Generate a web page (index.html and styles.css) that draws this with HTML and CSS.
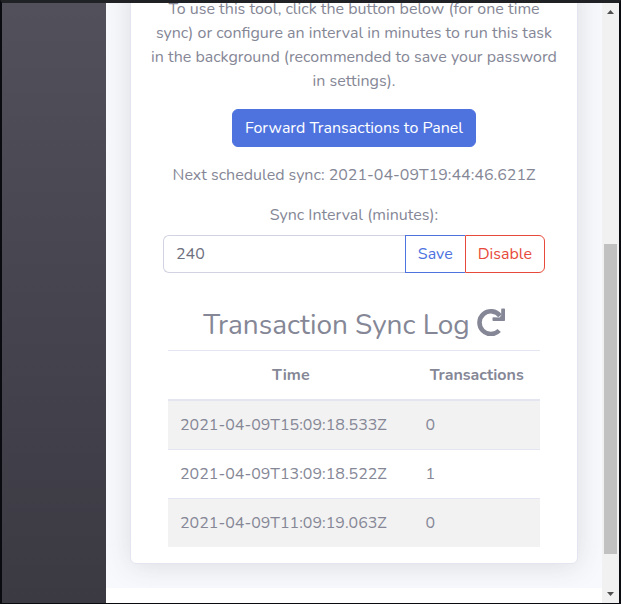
FILE: index.html
```html
<!DOCTYPE html>
<html lang="en">
<head>
<meta charset="utf-8">
<title>Transaction Sync</title>
<link rel="stylesheet" href="styles.css">
</head>
<body>
<div class="window">
  <nav class="sidebar" aria-label="Sidebar"></nav>
  <div class="page">
    <main class="content">
      <section class="card">
        <p class="intro">To use this tool, click the button below (for one time<br>sync) or configure an interval in minutes to run this task<br>in the background (recommended to save your password<br>in settings).</p>
        <button class="btn btn-primary" type="button">Forward Transactions to Panel</button>
        <p class="text">Next scheduled sync: 2021-04-09T19:44:46.621Z</p>
        <form class="interval">
          <label for="interval">Sync Interval (minutes):</label>
          <div class="input-group">
            <input id="interval" type="text" inputmode="numeric" value="240">
            <button class="btn btn-save" type="button">Save</button>
            <button class="btn btn-disable" type="button">Disable</button>
          </div>
        </form>
        <h3 class="log-title">Transaction Sync Log
          <svg class="icon" viewBox="0 0 28 28" aria-hidden="true">
            <path d="M22.2 22.5A11.4 11.4 0 1 1 23 7.8" fill="none" stroke="currentColor" stroke-width="4.6"/>
            <path d="M28 1.2V12.2Q28 13 27.2 13H16.2Q15.500 13 15.500 12.2V10.1Q15.500 9.3 16.3 9.3L22.500 9.6L24.2 7.500V1.2Q24.2 .500 25 .500H27.2Q28 .500 28 1.2Z" fill="currentColor"/>
          </svg>
        </h3>
        <table class="log">
          <thead>
            <tr><th scope="col">Time</th><th scope="col">Transactions</th></tr>
          </thead>
          <tbody>
            <tr><td>2021-04-09T15:09:18.533Z</td><td>0</td></tr>
            <tr><td>2021-04-09T13:09:18.522Z</td><td>1</td></tr>
            <tr><td>2021-04-09T11:09:19.063Z</td><td>0</td></tr>
          </tbody>
        </table>
      </section>
    </main>
    <footer class="footer"></footer>
  </div>
  <div class="scrollbar" aria-hidden="true">
    <svg class="arrow" viewBox="0 0 17 17"><path d="M5 11h7L8.500 7z" fill="#505050"/></svg>
    <div class="track"><div class="thumb"></div></div>
    <svg class="arrow" viewBox="0 0 17 17"><path d="M5 6h7L8.500 10z" fill="#505050"/></svg>
  </div>
</div>
</body>
</html>
```
FILE: styles.css
```css
* { box-sizing: border-box; }

body {
  margin: 0;
  color: #858796;
  font: 16px/24px Nunito, Roboto, sans-serif;
}

.window {
  display: flex;
  height: 100vh;
  border: 2px solid #0a0b11;
  border-top: 3px solid #202124;
  border-bottom-width: 1px;
  overflow: hidden;
}

.sidebar {
  flex: 0 0 104px;
  background: linear-gradient(#51505b, #3b3a43);
}

/* Scrolled to its end: the top of the card runs out of view. */
.page {
  flex: 1;
  min-width: 0;
  display: flex;
  flex-direction: column;
  justify-content: flex-end;
  overflow: hidden;
  background: #f8f9fc;
}

.content { flex: none; padding: 24px; }

.card {
  display: flex;
  flex-direction: column;
  align-items: center;
  padding: 16px 20px;
  border: 1px solid #e3e6f0;
  border-radius: 6px;
  background: #fff;
  box-shadow: 0 2px 28px rgba(58, 59, 69, 0.15);
  text-align: center;
}

.intro, .text { margin: 0 0 16px; white-space: nowrap; }

.btn {
  height: 38px;
  padding: 0 12px;
  border: 1px solid;
  background: #fff;
  font: inherit;
}

.btn-primary {
  margin-bottom: 16px;
  border-color: #4e73df;
  border-radius: 6px;
  background: #4e73df;
  color: #fff;
}

.interval { align-self: stretch; padding: 0 12px; }

.interval label { display: block; margin-bottom: 8px; }

.input-group { display: flex; }

.input-group input {
  flex: 1;
  min-width: 0;
  height: 38px;
  padding: 0 12px;
  border: 1px solid #d1d3e2;
  border-right: 0;
  border-radius: 6px 0 0 6px;
  background: #fff;
  color: #6e707e;
  font: inherit;
}

.btn-save { border-color: #4e73df; border-right: 0; color: #4e73df; }

.btn-disable {
  border-color: #e74a3b;
  border-radius: 0 6px 6px 0;
  color: #e74a3b;
}

.log-title {
  display: flex;
  align-items: flex-start;
  gap: 7px;
  margin: 35px 0 8px;
  font-size: 28px;
  line-height: 34px;
  font-weight: 400;
  white-space: nowrap;
}

.icon { width: 28px; height: 28px; }

.log {
  width: calc(100% - 34px);
  border-collapse: collapse;
}

.log th, .log td {
  padding: 12px;
  border-top: 1px solid #e3e6f0;
}

.log th { border-bottom: 2px solid #e3e6f0; font-weight: 700; }
.log th:first-child { width: 66%; }
.log td { text-align: left; }
.log tbody tr:nth-child(odd) { background: #f2f2f2; }

.footer {
  position: relative;
  flex: 0 0 15px;
  background: #fff;
}

.scrollbar {
  flex: 0 0 17px;
  display: flex;
  flex-direction: column;
  background: #f1f1f1;
}

.arrow { flex: none; width: 17px; height: 17px; }

.track {
  flex: 1;
  display: flex;
  flex-direction: column;
  justify-content: flex-end;
  padding: 0 2px 32px;
}

.thumb { height: 58%; background: #c1c1c1; }
```
